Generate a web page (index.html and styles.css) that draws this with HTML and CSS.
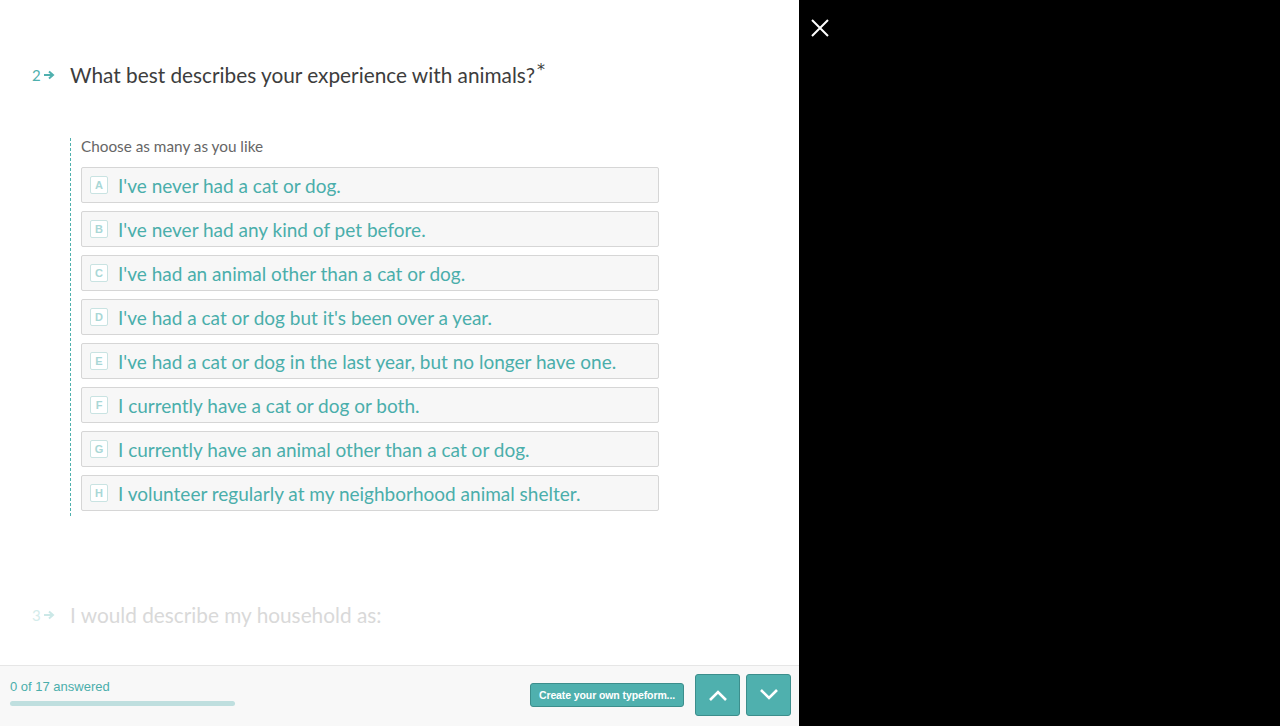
FILE: index.html
```html
<!DOCTYPE html>
<html>
<head>
<meta charset="utf-8">
<link rel="stylesheet" href="styles.css">
</head>
<body>
<div class="app">
  <div class="panel">
    <div class="content">
      <div class="question">
        <div class="qhead">
          <span class="qnum">2<svg class="arrow" width="11" height="10" viewBox="0 0 11 10"><path d="M0 5H8M5 1.5L9 5L5 8.5" fill="none" stroke="currentColor" stroke-width="2"/></svg></span>
          <h1 class="qtitle">What best describes your experience with animals?<sup class="req">*</sup></h1>
        </div>
        <div class="answers">
          <div class="hint">Choose as many as you like</div>
          <ul class="options">
            <li class="option"><span class="key">A</span><span class="label">I've never had a cat or dog.</span></li>
            <li class="option"><span class="key">B</span><span class="label">I've never had any kind of pet before.</span></li>
            <li class="option"><span class="key">C</span><span class="label">I've had an animal other than a cat or dog.</span></li>
            <li class="option"><span class="key">D</span><span class="label">I've had a cat or dog but it's been over a year.</span></li>
            <li class="option"><span class="key">E</span><span class="label">I've had a cat or dog in the last year, but no longer have one.</span></li>
            <li class="option"><span class="key">F</span><span class="label">I currently have a cat or dog or both.</span></li>
            <li class="option"><span class="key">G</span><span class="label">I currently have an animal other than a cat or dog.</span></li>
            <li class="option"><span class="key">H</span><span class="label">I volunteer regularly at my neighborhood animal shelter.</span></li>
          </ul>
        </div>
      </div>
      <div class="question next">
        <div class="qhead">
          <span class="qnum">3<svg class="arrow" width="11" height="10" viewBox="0 0 11 10"><path d="M0 5H8M5 1.5L9 5L5 8.5" fill="none" stroke="currentColor" stroke-width="2"/></svg></span>
          <h1 class="qtitle">I would describe my household as:</h1>
        </div>
      </div>
    </div>
    <footer class="footer">
      <div class="progress">
        <div class="progress-text">0 of 17 answered</div>
        <div class="progress-bar"></div>
      </div>
      <div class="footer-actions">
        <button class="create">Create your own typeform...</button>
        <button class="nav"><svg width="22" height="14" viewBox="0 0 22 14"><path d="M3 12L11 4L19 12" fill="none" stroke="#fff" stroke-width="2.6"/></svg></button>
        <button class="nav"><svg width="22" height="14" viewBox="0 0 22 14"><path d="M3 2L11 10L19 2" fill="none" stroke="#fff" stroke-width="2.6"/></svg></button>
      </div>
    </footer>
  </div>
  <div class="overlay">
    <button class="close"><svg width="18" height="18" viewBox="0 0 18 18"><path d="M1 1L17 17M17 1L1 17" stroke="#fff" stroke-width="2"/></svg></button>
  </div>
</div>
</body>
</html>
```

FILE: styles.css
```css
* { box-sizing: border-box; }
html, body { margin: 0; padding: 0; height: 100%; }
body { font-family: "Source Sans Pro", "Lato", "Liberation Sans", sans-serif; overflow: hidden; }
.app { display: flex; height: 726px; width: 1280px; }
.panel { width: 799px; background: #fff; display: flex; flex-direction: column; }
.content { flex: 1; padding: 60px 0 0 32px; overflow: hidden; }
.overlay { flex: 1; background: #000; padding: 18px 0 0 11px; }
.close { background: none; border: 0; padding: 0; width: 20px; height: 20px; display: flex; align-items: center; justify-content: center; }

.qhead { display: flex; align-items: center; }
.qnum { width: 38px; display: flex; align-items: center; gap: 3px; color: #4fb0ae; font-size: 15px; }
.arrow { color: #4fb0ae; }
.qtitle { margin: 0; font-weight: 400; font-size: 20.8px; color: #3d3d3d; line-height: 30px; }
.req { font-family: "DejaVu Sans", sans-serif; font-weight: 400; font-size: 16px; vertical-align: 0; position: relative; top: -8px; margin-left: 2px; line-height: 0; }

.answers { margin: 48px 0 0 38px; border-left: 1px dashed #4fb0ae; padding: 0 0 5px 10px; width: 590px; }
.hint { font-size: 15.3px; color: #666; line-height: 16px; padding-bottom: 13px; }
.options { list-style: none; margin: 0; padding: 0; display: flex; flex-direction: column; gap: 8px; }
.option { display: flex; align-items: center; height: 36px; width: 578px; background: #f7f7f7; border: 1px solid #d6d6d6; border-radius: 2px; padding-left: 8px; }
.key { width: 18px; height: 18px; border: 1px solid #c9e3e2; border-radius: 2px; background: #fff; color: #a9d7d6; font-family: "Liberation Sans", sans-serif; font-weight: 700; font-size: 11px; display: flex; align-items: center; justify-content: center; margin-right: 10px; }
.label { font-size: 19px; color: #4aaeab; }

.next { margin-top: 84px; }
.next .qnum { color: #d4eceb; }
.next .arrow { color: #cbe8e7; }
.next .qtitle { color: #d9d9d9; }

.footer { height: 61px; background: #f8f8f8; border-top: 1px solid #e6e6e6; display: flex; justify-content: space-between; padding: 0 8px 0 10px; }
.progress { padding-top: 13px; }
.progress-text { font-family: "Liberation Sans", sans-serif; font-size: 13px; color: #4aaeab; line-height: 16px; }
.progress-bar { margin-top: 6px; width: 225px; height: 5px; border-radius: 3px; background: #bfdfdf; }
.footer-actions { display: flex; align-items: center; gap: 6px; padding-bottom: 2px; }
.create { margin-right: 5px; font-family: "Liberation Sans", sans-serif; font-weight: 700; font-size: 10.5px; letter-spacing: -0.1px; white-space: nowrap; color: #fff; background: #4fb0ae; border: 1px solid #3c8e8c; border-radius: 3px; height: 24px; padding: 0; width: 154px; }
.nav { width: 45px; height: 42px; background: #4fb0ae; border: 1px solid #3c8e8c; border-radius: 3px; display: flex; align-items: center; justify-content: center; padding: 0; }
```
